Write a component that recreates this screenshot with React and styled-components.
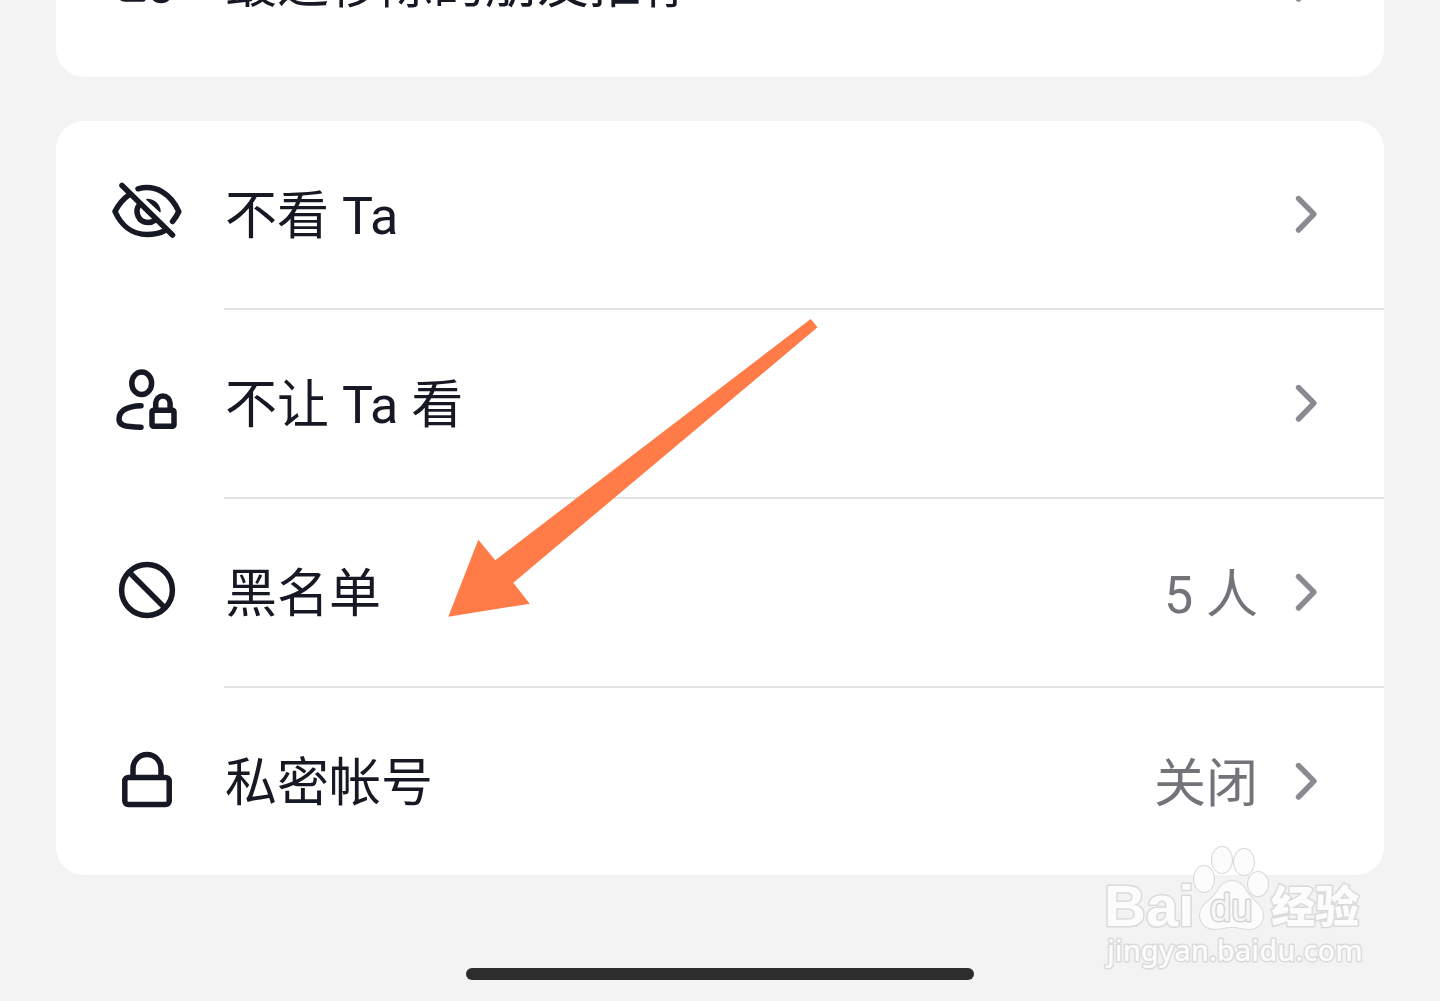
import React from 'react';
import styled, { createGlobalStyle } from 'styled-components';

const GlobalStyle = createGlobalStyle`
  body {
    margin: 0;
    background-color: #f3f3f3;
  }
`;

const Screen = styled.main`
  position: relative;
  box-sizing: border-box;
  min-height: 100vh;
  padding: 0 56px 21px;
  overflow: hidden;
  display: flex;
  flex-direction: column;
  gap: 44px;
  background-color: #f3f3f3;
  font-family: Roboto, 'Noto Sans CJK SC', sans-serif;
`;

const Card = styled.section`
  position: relative;
  display: flex;
  flex-direction: column;
  border-radius: 28px;
  background-color: #fff;
  /* the list is scrolled, so the first card is partly out of view */
  margin-top: ${({ $scrolled }) => ($scrolled ? '-110px' : '0')};
`;

const Row = styled.button`
  display: flex;
  align-items: center;
  height: 187px;
  padding: 0 66px 0 56px;
  border: 0;
  background: none;
  color: #161823;
  font: inherit;
  font-size: 52px;
  line-height: 75px;
  text-align: left;
  cursor: pointer;
`;

const Divider = styled.hr`
  width: auto;
  height: 2px;
  margin: 0 0 0 168px;
  border: 0;
  background-color: #e3e3e4;
`;

const Icon = styled.svg`
  flex: none;
  width: 70px;
  height: 71px;
  margin-right: 43px;
  fill: none;
  stroke: #161823;
  stroke-width: 5.5;
  stroke-linecap: round;
  stroke-linejoin: round;
`;

const Label = styled.span`
  flex: 1;
  padding-top: 4px;
  white-space: nowrap;
`;

const Value = styled.span`
  margin-right: 36px;
  padding-top: 6px;
  color: #737479;
`;

const Chevron = styled.svg`
  flex: none;
  width: 24px;
  height: 41px;
  fill: none;
  stroke: #8a8b90;
  stroke-width: 5.4;
  stroke-linecap: round;
  stroke-linejoin: round;
`;

const Arrow = styled.svg`
  position: absolute;
  left: 392px;
  top: 198px;
  width: 370px;
  height: 298px;
  fill: #ff7b47;
  pointer-events: none;
`;

const HomeBar = styled.div`
  align-self: center;
  width: 508px;
  max-width: 60%;
  height: 12px;
  margin-top: auto;
  border-radius: 6px;
  background-color: #2d2d2d;
`;

const Watermark = styled.svg`
  position: absolute;
  right: 76px;
  bottom: 31px;
  width: 260px;
  height: 124px;
  overflow: visible;
  fill: #fcfcfc;
  stroke: #dadada;
  stroke-width: 3;
  stroke-linejoin: round;
  paint-order: stroke;
  pointer-events: none;
`;

const Brand = styled.text`
  font-family: 'Liberation Sans', sans-serif;
  font-size: 58px;
  font-weight: 700;
`;

const BrandInner = styled.text`
  font-family: 'Liberation Sans', sans-serif;
  font-size: 38px;
  fill: #f6f6f6;
  stroke: #d4d4d4;
`;

const BrandCn = styled.text`
  font-family: 'Noto Sans CJK SC', sans-serif;
  font-size: 44px;
  font-weight: 900;
`;

const Site = styled.text`
  font-family: 'Noto Sans', sans-serif;
  font-size: 29px;
  font-weight: 500;
`;

const icons = {
  friend: (
    <>
      <ellipse cx="24" cy="18" rx="10" ry="11" />
      <path d="M31 51H13c-3 0-5-2-5-5 0-6 7-10 17-10" />
      <circle cx="49" cy="43" r="9.5" />
    </>
  ),
  hidden: (
    <>
      <path d="M10 6.5L60.5 56" />
      <path d="M17.5 15.5C11 20 6 26.5 3 32.5C9 46 20 55.5 35 55.5C41 55.5 47 54.5 52 52" />
      <path d="M26 9.8C44 5 59 15 66.8 32.5C65 36.5 63 39.5 60.5 42.5" />
      <path d="M27.5 25.5C22 32 26 43.5 36 43.5C39 43.5 41.5 42.5 43.5 41" />
      <path d="M35 20.5C42 20.5 47.5 25.5 48 32.5Z" fill="#161823" strokeWidth="1.5" />
    </>
  ),
  personLock: (
    <>
      <ellipse cx="29.7" cy="15.3" rx="9.9" ry="11.3" />
      <path d="M29 37.7C15 38 7 43 7 51C7 57.5 12 59 29 59.2" />
      <rect x="40" y="42.3" width="22" height="16" rx="1.5" />
      <path d="M43.7 42V35.2a7.2 7.2 0 0 1 14.4 0V42" />
    </>
  ),
  ban: (
    <>
      <circle cx="35" cy="33" r="25.4" />
      <path d="M17.3 15.3L52.5 50.5" />
    </>
  ),
  lock: (
    <>
      <rect x="12.8" y="31.5" width="44.4" height="27" rx="3.5" />
      <path d="M21 31V22.5a14 14 0 0 1 28 0V31" />
    </>
  ),
};

const settings = [
  { icon: 'hidden', label: '不看 Ta' },
  { icon: 'personLock', label: '不让 Ta 看' },
  { icon: 'ban', label: '黑名单', value: '5 人' },
  { icon: 'lock', label: '私密帐号', value: '关闭' },
];

const SettingRow = ({ icon, label, value }) => {
  return (
    <Row type="button">
      <Icon viewBox="0 0 70 71" aria-hidden="true">{icons[icon]}</Icon>
      <Label>{label}</Label>
      {value && <Value>{value}</Value>}
      <Chevron viewBox="0 0 24 41" aria-hidden="true">
        <path d="M4.5 4.5L20 20.2L4.5 36" />
      </Chevron>
    </Row>
  );
};

const BaiduMark = () => {
  return (
    <Watermark viewBox="0 0 260 124">
      <Brand x="0" y="80">Bai</Brand>
      <g strokeWidth="2">
        <ellipse cx="100" cy="33" rx="10" ry="13" />
        <ellipse cx="118" cy="14" rx="10" ry="13" />
        <ellipse cx="140" cy="16" rx="10" ry="13" />
        <ellipse cx="154" cy="38" rx="10" ry="12" />
        <path d="M128 35C118 35 115 44 110 50C104 56 96 60 96 69C96 78 103 83 111 83C117 83 121 81 128 81C135 81 139 83 145 83C153 83 159 78 159 69C159 61 152 57 146 50C141 44 138 35 128 35Z" />
      </g>
      <BrandInner x="106" y="75">du</BrandInner>
      <BrandCn x="167" y="77">经验</BrandCn>
      <Site x="3" y="115">jingyan.baidu.com</Site>
    </Watermark>
  );
};

const App = () => {
  return (
    <>
      <GlobalStyle />
      <Screen>
        <Card $scrolled>
          <SettingRow icon="friend" label="最近移除的朋友推荐" />
        </Card>
        <Card>
          {settings.map((item, i) => (
            <React.Fragment key={item.icon}>
              {i > 0 && <Divider />}
              <SettingRow {...item} />
            </React.Fragment>
          ))}
          <Arrow viewBox="448 319 370 298" aria-hidden="true">
            <path d="M810.7 319L817.5 327.3L513.3 582.7L529.7 603.7L448.3 616.7L478.3 539.7L495.3 560.3Z" />
          </Arrow>
        </Card>
        <HomeBar />
        <BaiduMark />
      </Screen>
    </>
  );
};

export default App;
